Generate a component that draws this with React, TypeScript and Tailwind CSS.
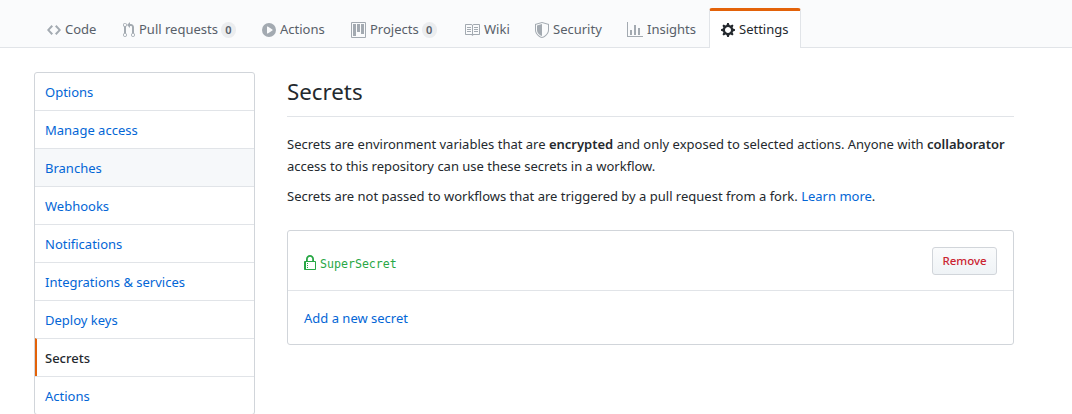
import React from "react";

const Icon = ({ w, d, className }: { w: number; d: string; className: string }) => (
  <svg width={w} height={16} viewBox={`0 0 ${w} 16`} className={className} fill="currentColor">
    <path fillRule="evenodd" d={d} />
  </svg>
);

const paths = {
  code: "M9.5 3L8 4.5 11.5 8 8 11.5 9.5 13 14 8 9.5 3zm-5 0L0 8l4.5 5L6 11.5 2.5 8 6 4.5 4.5 3z",
  pull: "M11 11.28V5c-.03-.78-.34-1.47-.94-2.06C9.46 2.35 8.78 2.03 8 2H7V0L4 3l3 3V4h1c.27.02.48.11.69.31.21.2.3.42.31.69v6.28A1.993 1.993 0 0 0 10 15a1.993 1.993 0 0 0 1-3.72zm-1 2.92c-.66 0-1.2-.55-1.2-1.2 0-.65.55-1.2 1.2-1.2.65 0 1.2.55 1.2 1.2 0 .65-.55 1.2-1.2 1.2zM4 3c0-1.11-.89-2-2-2a1.993 1.993 0 0 0-1 3.72v6.56A1.993 1.993 0 0 0 2 15a1.993 1.993 0 0 0 1-3.72V4.72c.59-.34 1-.98 1-1.72zm-.8 10c0 .66-.55 1.2-1.2 1.2-.65 0-1.2-.55-1.2-1.2 0-.65.55-1.2 1.2-1.2.65 0 1.2.55 1.2 1.2zM2 4.2C1.34 4.2.8 3.65.8 3c0-.65.55-1.2 1.2-1.2.65 0 1.2.55 1.2 1.2 0 .65-.55 1.2-1.2 1.2z",
  play: "M14 8A7 7 0 1 1 0 8a7 7 0 0 1 14 0zm-8.223 3.482l4.599-3.066a.5.5 0 0 0 0-.832L5.777 4.518A.5.5 0 0 0 5 4.934v6.132a.5.5 0 0 0 .777.416z",
  project: "M10 12h3V2h-3v10zm-4-2h3V2H6v8zm-4 4h3V2H2v12zm-1 1h13V1H1v14zM14 0H1a1 1 0 0 0-1 1v14a1 1 0 0 0 1 1h13a1 1 0 0 0 1-1V1a1 1 0 0 0-1-1z",
  book: "M3 5h4v1H3V5zm0 3h4V7H3v1zm0 2h4V9H3v1zm11-5h-4v1h4V5zm0 2h-4v1h4V7zm0 2h-4v1h4V9zm2-6v9c0 .55-.45 1-1 1H9.5l-1 1-1-1H2c-.55 0-1-.45-1-1V3c0-.55.45-1 1-1h5.5l1 1 1-1H15c.55 0 1 .45 1 1zm-8 .5L7.5 3H2v9h6V3.5zm7-.5H9.5l-.5.5V12h6V3z",
  shield: "M0 2l7-2 7 2v6.02C14 12.69 8.69 16 7 16c-1.69 0-7-3.31-7-7.98V2zm1 .75L7 1l6 1.75v5.268C13 12.104 8.449 15 7 15c-1.449 0-6-2.896-6-6.982V2.75zm1 .75L7 2v12c-1.207 0-5-2.482-5-5.985V3.5z",
  graph: "M16 14v1H0V0h1v14h15zM5 13H3V8h2v5zm4 0H7V3h2v10zm4 0h-2V6h2v7z",
  gear: "M14 8.77v-1.6l-1.94-.64-.45-1.09.88-1.84-1.13-1.13-1.81.91-1.09-.45-.69-1.92h-1.6l-.63 1.94-1.11.45-1.84-.88-1.13 1.13.91 1.81-.45 1.09L0 7.23v1.59l1.94.64.45 1.09-.88 1.84 1.13 1.13 1.81-.91 1.09.45.69 1.92h1.59l.63-1.94 1.11-.45 1.84.88 1.13-1.13-.92-1.81.47-1.09L14 8.75v.02zM7 11c-1.66 0-3-1.34-3-3s1.34-3 3-3 3 1.34 3 3-1.34 3-3 3z",
  lock: "M4 13H3v-1h1v1zm8-6v7c0 .55-.45 1-1 1H1c-.55 0-1-.45-1-1V7c0-.55.45-1 1-1h1V4c0-2.2 1.8-4 4-4s4 1.8 4 4v2h1c.55 0 1 .45 1 1zM3.8 6h4.41V4c0-1.22-.98-2.2-2.2-2.2-1.22 0-2.2.98-2.2 2.2v2H3.8zM11 7H2v7h9V7zM4 8H3v1h1V8zm0 2H3v1h1v-1z",
};

const tabs = [
  { label: "Code", icon: paths.code, w: 14, box: "w-[76px]" },
  { label: "Pull requests", icon: paths.pull, w: 12, box: "w-[139px]", count: "0" },
  { label: "Actions", icon: paths.play, w: 14, box: "w-[89px]" },
  { label: "Projects", icon: paths.project, w: 15, box: "w-[113px]", count: "0" },
  { label: "Wiki", icon: paths.book, w: 16, box: "w-[71px]" },
  { label: "Security", icon: paths.shield, w: 14, box: "w-[92px]" },
  { label: "Insights", icon: paths.graph, w: 16, box: "w-[94px]" },
];

const menu = [
  "Options",
  "Manage access",
  "Branches",
  "Webhooks",
  "Notifications",
  "Integrations & services",
  "Deploy keys",
  "Secrets",
  "Actions",
];

export default function App() {
  return (
    <div className="h-[414px] w-[1072px] overflow-hidden bg-white font-['Noto_Sans','Open_Sans',sans-serif] text-[13px] text-[#24292e]">
      <div className="flex h-[48px] items-end border-b border-[#e1e4e8] bg-[#fafbfc] pl-[35px]">
        {tabs.map((t) => (
          <div key={t.label} className={`flex h-[40px] items-center gap-[4px] pl-[12px] pt-[6px] text-[#586069] ${t.box}`}>
            <Icon w={t.w} d={t.icon} className="shrink-0 text-[#a3aab1]" />
            <span>{t.label}</span>
            {t.count && (
              <span className="-ml-[1px] flex h-[16px] w-[15px] items-center justify-center rounded-full bg-[#ebedef] text-[11px] font-semibold text-[#586069]">
                {t.count}
              </span>
            )}
          </div>
        ))}
        <div className="-mb-px flex h-[40px] w-[92px] items-center gap-[4px] rounded-t-[3px] border-x border-t-[3px] border-x-[#e1e4e8] border-t-[#e36209] bg-white pl-[11px] text-[#24292e]">
          <Icon w={14} d={paths.gear} className="shrink-0" />
          <span>Settings</span>
        </div>
      </div>

      <div className="flex items-start gap-[32px] pl-[34px] pt-[24px]">
        <div className="w-[221px] shrink-0 overflow-hidden rounded-[3px] border border-[#d1d5da]">
          {menu.map((item, i) => (
            <div
              key={item}
              className={`flex items-center pt-[2px] ${i > 0 ? "h-[38px] border-t border-[#e1e4e8]" : "h-[37px]"} ${
                item === "Branches" ? "bg-[#f6f8fa]" : ""
              } ${
                item === "Secrets"
                  ? "border-l-2 border-l-[#e36209] pl-[8px] font-medium text-[#24292e]"
                  : "pl-[10px] text-[#0366d6]"
              }`}
            >
              {item}
            </div>
          ))}
        </div>

        <div className="w-[727px] shrink-0">
          <h2 className="border-b border-[#e1e4e8] pb-[6px] pt-[2px] text-[22.3px] leading-[36px] text-[#24292e]">Secrets</h2>
          <p className="mt-[16px] leading-[22px]">
            Secrets are environment variables that are <strong className="font-semibold">encrypted</strong> and only
            exposed to selected actions. Anyone with <strong className="font-semibold">collaborator</strong> access to
            this repository can use these secrets in a workflow.
          </p>
          <p className="mt-[8px] leading-[22px]">
            Secrets are not passed to workflows that are triggered by a pull request from a fork.{" "}
            <a className="text-[#0366d6]">Learn more</a>.
          </p>
          <div className="mt-[23px] rounded-[3px] border border-[#d1d5da]">
            <div className="flex h-[59px] items-center justify-between px-[16px]">
              <div className="flex items-center gap-[4px] pt-[5px] text-[#28a745]">
                <Icon w={12} d={paths.lock} className="shrink-0" />
                <span className="pt-[3px] font-['DejaVu_Sans_Mono',monospace] text-[11.6px]">SuperSecret</span>
              </div>
              <button className="h-[28px] w-[65px] rounded-[3px] border border-[#d1d5da] bg-gradient-to-b from-[#fafbfc] to-[#eff3f6] pt-[1px] text-[11.5px] font-medium text-[#cb2431]">
                Remove
              </button>
            </div>
            <div className="flex h-[54px] items-center border-t border-[#e1e4e8] pl-[16px] pt-[2px] text-[#0366d6]">
              Add a new secret
            </div>
          </div>
        </div>
      </div>
    </div>
  );
}
